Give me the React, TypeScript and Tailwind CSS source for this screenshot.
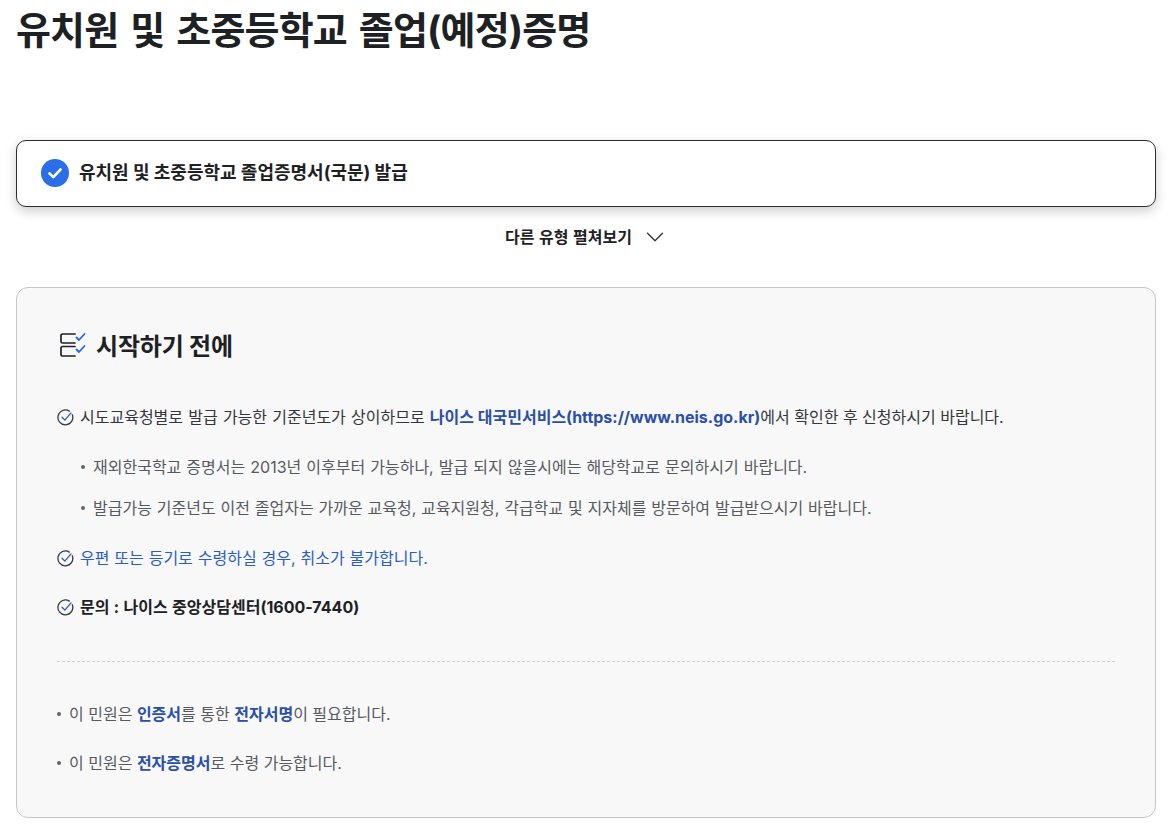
import React from 'react';
import { ChevronDown } from 'lucide-react';

const FONT = { fontFamily: 'Inter, "Noto Sans CJK KR", "Noto Sans", sans-serif' };

// Small outlined check circle used on the notice rows
const CheckCircle = () => (
  <svg width="17" height="17" viewBox="0 0 16 16" fill="none" className="shrink-0">
    <path d="M14.4 5.4A7 7 0 1 1 11.6 2" stroke="#33363d" strokeWidth="1.2" strokeLinecap="round" />
    <path d="M4.8 7.8l2.6 2.7 5.8-6.8" stroke="#2a5cc4" strokeWidth="1.25" strokeLinecap="round" strokeLinejoin="round" />
  </svg>
);

const ListCheckIcon = () => (
  <svg width="28" height="28" viewBox="0 0 28 28" fill="none" className="shrink-0">
    <path d="M17 3H4.5A1.5 1.5 0 0 0 3 4.5v6A1.5 1.5 0 0 0 4.5 12H17" stroke="#1f2127" strokeWidth="1.7" strokeLinecap="round" />
    <path d="M17 15.5H4.5A1.5 1.5 0 0 0 3 17v6.5A1.5 1.5 0 0 0 4.5 25H17" stroke="#1f2127" strokeWidth="1.7" strokeLinecap="round" />
    <path d="M18.5 6.5L21 9l5.5-6" stroke="#2563eb" strokeWidth="1.8" strokeLinecap="round" strokeLinejoin="round" />
    <path d="M18.5 18.5L21 21l5.5-6" stroke="#2563eb" strokeWidth="1.8" strokeLinecap="round" strokeLinejoin="round" />
  </svg>
);

const Bullet = () => <span className="w-1 h-1 rounded-full bg-[#666] shrink-0" />;

export default function App() {
  return (
    <div style={FONT} className="w-[1172px] h-[831px] bg-white overflow-hidden px-4">
      <h1 className="text-[38px] leading-[38px] font-bold text-[#1e2124] pt-[11px] h-[140px] tracking-[-0.85px] [word-spacing:3.8px]">
        유치원 및 초중등학교 졸업(예정)증명
      </h1>

      <div className="h-[67px] flex items-center gap-[10px] pl-[24px] pb-[3px] bg-white border border-[#2b2d33] rounded-[10px] shadow-[0_4px_12px_rgba(0,0,0,0.2)]">
        <span className="w-7 h-7 rounded-full bg-[#2a6ee8] flex items-center justify-center mt-[1px]">
          <svg width="18" height="18" viewBox="0 0 18 18" fill="none">
            <path d="M3.5 9.5l3.8 3.6 7.2-7.6" stroke="#fff" strokeWidth="2.6" strokeLinecap="round" strokeLinejoin="round" />
          </svg>
        </span>
        <span className="text-[18px] font-bold text-[#1e2124]">유치원 및 초중등학교 졸업증명서(국문) 발급</span>
      </div>

      <div className="h-[60px] flex items-center justify-center gap-2 pl-[3px] text-[16px] font-bold text-[#1e2124] pb-[1px] [word-spacing:0.8px]">
        <span>다른 유형 펼쳐보기</span>
        <ChevronDown size={30} strokeWidth={1.1} color="#33363d" />
      </div>

      <div className="mt-[20px] h-[531px] bg-[#f8f8f8] border border-[#c6c6c6] rounded-[12px] px-10 text-[16px]">
        <div className="flex items-center gap-[10px] pt-[43px] h-[70px] pl-[1px]">
          <ListCheckIcon />
          <span className="mt-1 text-[24px] font-bold text-[#1e2124] tracking-[-0.2px]">시작하기 전에</span>
        </div>

        <div className="mt-[47px] flex items-center gap-[6px] h-6 text-[#33363d]">
          <CheckCircle />
          <span>
            <span className="[word-spacing:0.7px]">시도교육청별로 발급 가능한 기준년도가 상이하므로 </span>
            <span className="font-bold text-[#2a4fa8]">나이스 대국민서비스(https://www.neis.go.kr)</span>
            에서 확인한 후 신청하시기 바랍니다.
          </span>
        </div>

        <div className="mt-[26px] flex items-center gap-2 h-6 pl-[24px] text-[#555a60] [word-spacing:0.55px]">
          <Bullet />
          <span>재외한국학교 증명서는 2013년 이후부터 가능하나, 발급 되지 않을시에는 해당학교로 문의하시기 바랍니다.</span>
        </div>
        <div className="mt-[17px] flex items-center gap-2 h-6 pl-[24px] text-[#555a60] [word-spacing:0.35px]">
          <Bullet />
          <span>발급가능 기준년도 이전 졸업자는 가까운 교육청, 교육지원청, 각급학교 및 지자체를 방문하여 발급받으시기 바랍니다.</span>
        </div>

        <div className="mt-[26px] flex items-center gap-[6px] h-6 text-[#2a5cc4] [word-spacing:0.4px]">
          <CheckCircle />
          <span>우편 또는 등기로 수령하실 경우, 취소가 불가합니다.</span>
        </div>
        <div className="mt-[25px] flex items-center gap-[6px] h-6 font-bold text-[#1e2124] [word-spacing:0.6px]">
          <CheckCircle />
          <span>문의 : 나이스 중앙상담센터(1600-7440)</span>
        </div>

        <div className="mt-[42px] border-t border-dashed border-[#cfcfcf]" />

        <div className="mt-[40px] flex items-center gap-2 h-6 text-[#555a60]">
          <Bullet />
          <span>
            이 민원은 <span className="font-bold text-[#2a4fa8]">인증서</span>를 통한{' '}
            <span className="font-bold text-[#2a4fa8]">전자서명</span>이 필요합니다.
          </span>
        </div>
        <div className="mt-[25px] flex items-center gap-2 h-6 text-[#555a60]">
          <Bullet />
          <span>
            이 민원은 <span className="font-bold text-[#2a4fa8]">전자증명서</span>로 수령 가능합니다.
          </span>
        </div>
      </div>
    </div>
  );
}
